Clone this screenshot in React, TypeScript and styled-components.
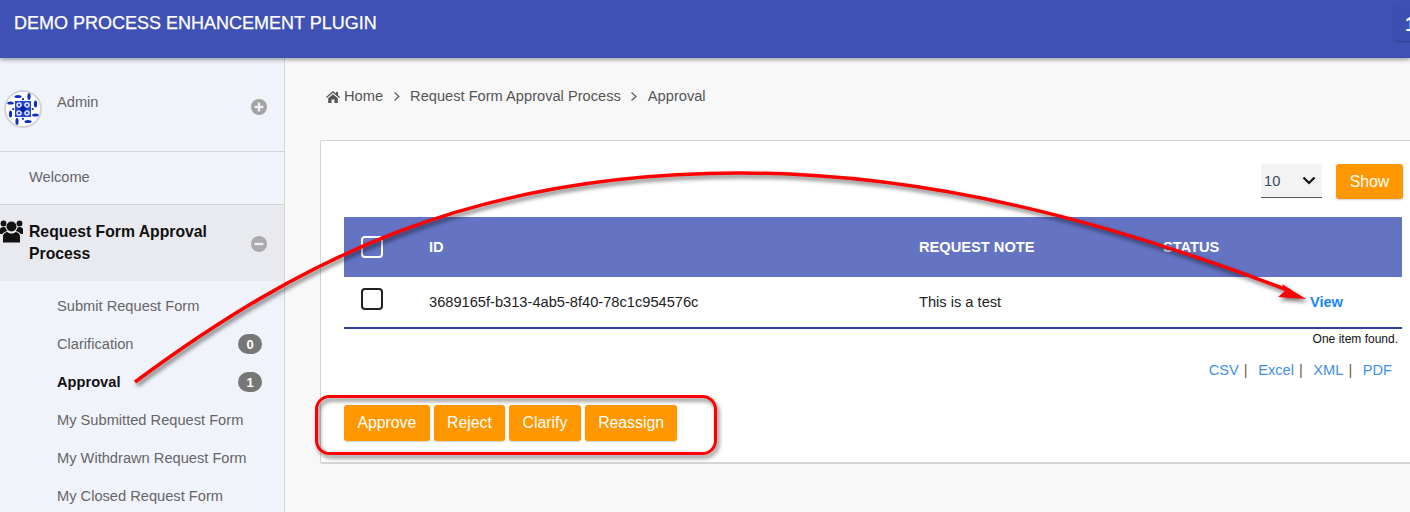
import React from "react";
import styled, { createGlobalStyle } from "styled-components";

const Global = createGlobalStyle`
  html, body { margin: 0; padding: 0; height: 512px; overflow: hidden; background: #f8f8f8; }
  body { font-family: "Liberation Sans", Arial, sans-serif; color: #333; }
  * { box-sizing: border-box; }
`;
const Page = styled.div`position: relative; width: 1410px; height: 512px; overflow: hidden; display: flex; flex-direction: column;`;
const Header = styled.header`
  height: 58px; flex: none; background: #3f51b5; box-shadow: 0 2px 4px rgba(0,0,0,.35); position: relative; z-index: 2;
  display: flex; justify-content: space-between; align-items: flex-start; padding: 12px 0 0 14px;
`;
const Brand = styled.div`color: #fff; font-size: 18px; line-height: 22px; -webkit-text-stroke: .25px #fff;`;
const HeaderButton = styled.div`
  width: 40px; height: 39px; margin-top: -10px; margin-right: -24px; background: #3d4fb0; border-radius: 4px;
  box-shadow: 0 1px 2px rgba(0,0,0,.25); color: #fff; font-size: 20px; font-weight: 700; padding: 12px 0 0 11px; line-height: 20px;
`;
const Body = styled.div`flex: 1; display: flex; min-height: 0;`;
const Sidebar = styled.aside`width: 285px; flex: none; background: #f1f3fb; border-right: 1px solid #d3d4d8; overflow: hidden;`;
const Profile = styled.div`height: 94px; border-bottom: 1px solid #d2d3d6; display: flex; position: relative; padding: 32px 0 0 4px;`;
const Avatar = styled.div`width: 38px; height: 38px; border-radius: 50%; border: 2px solid #d4d4d8; background: #fff; overflow: hidden; flex: none;`;
const ProfileName = styled.div`margin: 3px 0 0 15px; font-size: 14.65px; line-height: 18px; color: #666;`;
const Toggle = styled.div`position: absolute; left: 251px; width: 16px; height: 16px; top: ${p => p.$top}px;`;
const TopLink = styled.div`height: 53px; border-bottom: 1px solid #d2d3d6; padding: 16px 0 0 29px; font-size: 14.65px; line-height: 18px; color: #666;`;
const Group = styled.div`height: 76px; background: #e9eaf0; position: relative; padding: 16px 40px 0 29px; font-size: 15.75px; font-weight: 700; line-height: 22px; color: #111;`;
const GroupIcon = styled.svg`position: absolute; left: 0; top: 14px; width: 23px; height: 24px;`;
const SubList = styled.ul`list-style: none; margin: 6px 0 0; padding: 0;`;
const SubItem = styled.li`
  height: 38px; padding: 0 22px 0 57px; display: flex; justify-content: space-between; align-items: center;
  font-size: 14.65px; color: ${p => p.$active ? "#111" : "#666"}; font-weight: ${p => p.$active ? 700 : 400};
`;
const Badge = styled.span`width: 24px; height: 20px; border-radius: 10px; background: #777; color: #fff; font-size: 13px; font-weight: 700; display: flex; align-items: center; justify-content: center;`;
const Main = styled.main`flex: 1; padding: 0 0 0 35px; min-width: 0;`;
const Crumbs = styled.nav`height: 82px; padding: 30px 0 0 6px; display: flex; align-items: flex-start; font-size: 14.65px; line-height: 17px; color: #555;`;
const CrumbHome = styled.span`display: flex; align-items: center; gap: 4px;`;
const CrumbSep = styled.span`width: 27px; height: 17px; display: flex; justify-content: center; align-items: center;`;
const Card = styled.section`width: 1106px; height: 324px; background: #fff; border: 1px solid #d4d4d4; border-bottom-width: 2px; border-radius: 2px; padding: 23px 23px 0;`;
const PageSize = styled.div`display: flex; justify-content: flex-end; align-items: flex-start; gap: 14px; height: 53px;`;
const SizeSelect = styled.div`width: 61px; height: 34px; background: #f3f3f3; border-bottom: 1px solid #555; padding: 0 6px 0 3px; display: flex; align-items: center; justify-content: space-between; font-size: 14.65px; color: #3a4a66;`;
const Button = styled.button`
  height: ${p => p.$h || 36}px; padding: 0 13.4px; border: 0; border-radius: 3px; background: #ff9800; color: #fff; font: 15.8px "Liberation Sans", Arial, sans-serif;
  box-shadow: 0 1px 2px rgba(0,0,0,.2);
`;
const ShowButton = styled(Button)`margin-right: -1px; padding: 0; width: 67px;`;
const Table = styled.div`width: 1058px;`;
const Row = styled.div`display: grid; grid-template-columns: 85px 490px 244px 1fr; align-items: center; height: ${p => p.$head ? 60 : 52}px; ${p => p.$head ? "background:#6573c3;color:#fff;font-weight:700;" : "border-bottom:2px solid #303f9f;color:#222;"} font-size: 14.65px;`;
const Box = styled.span`width: 22px; height: 22px; margin-left: 17px; margin-top: ${p => p.$light ? 0 : -6}px; border-radius: 4px; border: 2px solid ${p => p.$light ? "#fff" : "#222"}; display: block;`;
const ViewCell = styled.span`text-align: right; padding-right: 59px; color: #1a87ee; font-weight: 700;`;
const Found = styled.div`text-align: right; font-size: 12px; line-height: 14px; color: #111; padding: 3px 4px 0 0;`;
const Exports = styled.div`display: flex; justify-content: flex-end; gap: 10.5px; padding: 16px 10px 0 0; font-size: 14.65px; line-height: 17px; color: #7a5a3a;`;
const ExportLink = styled.span`color: #3f8fe8;`;
const Pipe = styled.span`margin-left: 5px;`;
const Actions = styled.div`display: flex; gap: 4px; margin-top: 26px;`;
const Overlay = styled.svg`position: absolute; inset: 0; width: 1410px; height: 512px; z-index: 5; pointer-events: none; filter: drop-shadow(2px 3px 2px rgba(0,0,0,.55));`;

const Plus = ({ minus }: { minus?: boolean }) => (
  <svg viewBox="0 0 16 16" width="16" height="16">
    <circle cx="8" cy="8" r="8" fill={minus ? "#aaa" : "#a3a3a3"} />
    <rect x="3.500" y="6.800" width="9" height="2.400" fill="#eef0f6" />
    {!minus && <rect x="6.800" y="3.500" width="2.400" height="9" fill="#eef0f6" />}
  </svg>
);
const Chevron = () => (
  <svg width="8" height="11" viewBox="0 0 8 11"><path d="M1.500 1.500 6 5.500 1.500 9.500" fill="none" stroke="#555" strokeWidth="1.100" /></svg>
);
const Mandala = () => (
  <svg viewBox="0 0 34 34" width="34" height="34">
    {[0, 90, 180, 270].map(a => (
      <g key={a} transform={`rotate(${a} 17 17)`} fill="#0f2fc4">
        <ellipse cx="12" cy="4.500" rx="3.600" ry="1.600" />
        <ellipse cx="23" cy="4.500" rx="1.600" ry="3.400" />
        <ellipse cx="17" cy="7.200" rx="1.100" ry="1.100" />
      </g>
    ))}
    <rect x="9" y="9" width="16" height="16" fill="#2444cc" />
    {[[13, 13], [21, 13], [13, 21], [21, 21]].map(([x, y]) => (
      <g key={`${x}-${y}`}>
        <circle cx={x} cy={y} r="2.800" fill="#dbe1f8" />
        <circle cx={x} cy={y} r="1.200" fill="#2a48cc" />
      </g>
    ))}
    <path d="M17 13 21 17 17 21 13 17z" fill="#0a24a8" />
  </svg>
);

export default function App() {
  return (
    <Page>
      <Global />
      <Header>
        <Brand>DEMO PROCESS ENHANCEMENT PLUGIN</Brand>
        <HeaderButton>1</HeaderButton>
      </Header>
      <Body>
        <Sidebar>
          <Profile>
            <Avatar><Mandala /></Avatar>
            <ProfileName>Admin</ProfileName>
            <Toggle $top={41}><Plus /></Toggle>
          </Profile>
          <TopLink>Welcome</TopLink>
          <Group>
            <GroupIcon viewBox="0 0 23 24">
              <circle cx="11.500" cy="7.500" r="5" fill="#111" />
              <circle cx="3.500" cy="4.500" r="2.900" fill="#111" /><circle cx="19.500" cy="4.500" r="2.900" fill="#111" />
              <path d="M3 23.500v-6c0-3.500 3.500-4.500 4.500-4.500 1 1 2.500 1.500 4 1.500s3-.5 4-1.500c1 0 4.500 1 4.500 4.500v6z" fill="#111" />
              <path d="M0 15v-4.500c0-1.500 1.500-2.500 3.500-2.500 .8 0 1.500 .2 2 .5 .2 1.500 1 2.800 2 3.500-2.500 .6-4.500 1.500-5 3z" fill="#111" />
              <path d="M23 15v-4.500c0-1.500-1.500-2.500-3.500-2.500-.8 0-1.500 .2-2 .5-.2 1.500-1 2.800-2 3.500 2.500 .6 4.500 1.500 5 3z" fill="#111" />
            </GroupIcon>
            Request Form Approval Process
            <Toggle $top={31}><Plus minus /></Toggle>
          </Group>
          <SubList>
            <SubItem>Submit Request Form</SubItem>
            <SubItem>Clarification<Badge>0</Badge></SubItem>
            <SubItem $active>Approval<Badge>1</Badge></SubItem>
            <SubItem>My Submitted Request Form</SubItem>
            <SubItem>My Withdrawn Request Form</SubItem>
            <SubItem>My Closed Request Form</SubItem>
          </SubList>
        </Sidebar>
        <Main>
          <Crumbs>
            <CrumbHome>
              <svg width="14" height="12" viewBox="0 0 14 12"><path d="M7 0 0 6l.8 1L7 1.800 13.200 7l.8-1-2-1.700V1h-2v1.600zM2.200 7.200V12h3.300V8.500h3V12h3.300V7.200L7 3.200z" fill="#555" /></svg>
              Home
            </CrumbHome>
            <CrumbSep><Chevron /></CrumbSep>
            <span>Request Form Approval Process</span>
            <CrumbSep><Chevron /></CrumbSep>
            <span>Approval</span>
          </Crumbs>
          <Card>
            <PageSize>
              <SizeSelect>10
                <svg width="14" height="9" viewBox="0 0 14 9"><path d="M1.500 1.500 7 7l5.500-5.500" fill="none" stroke="#111" strokeWidth="2.200" /></svg>
              </SizeSelect>
              <ShowButton $h={35}>Show</ShowButton>
            </PageSize>
            <Table>
              <Row $head><Box $light /><span>ID</span><span>REQUEST NOTE</span><span>STATUS</span></Row>
              <Row><Box /><span>3689165f-b313-4ab5-8f40-78c1c954576c</span><span>This is a test</span><ViewCell>View</ViewCell></Row>
            </Table>
            <Found>One item found.</Found>
            <Exports>
              <span><ExportLink>CSV</ExportLink><Pipe>|</Pipe></span>
              <span><ExportLink>Excel</ExportLink><Pipe>|</Pipe></span>
              <span><ExportLink>XML</ExportLink><Pipe>|</Pipe></span>
              <ExportLink>PDF</ExportLink>
            </Exports>
            <Actions>
              <Button>Approve</Button><Button>Reject</Button><Button>Clarify</Button><Button>Reassign</Button>
            </Actions>
          </Card>
        </Main>
      </Body>
      <Overlay viewBox="0 0 1410 512">
        <path d="M135 382C300 260 470 173 740 173C930 173 1110 222 1290 291" fill="none" stroke="#f00" strokeWidth="3.500" />
        <path d="M1306 299 1278 297 1285 291 1282 284z" fill="#f00" />
        <rect x="316.500" y="396.500" width="399" height="57" rx="13" fill="none" stroke="#f00" strokeWidth="3" />
      </Overlay>
    </Page>
  );
}
